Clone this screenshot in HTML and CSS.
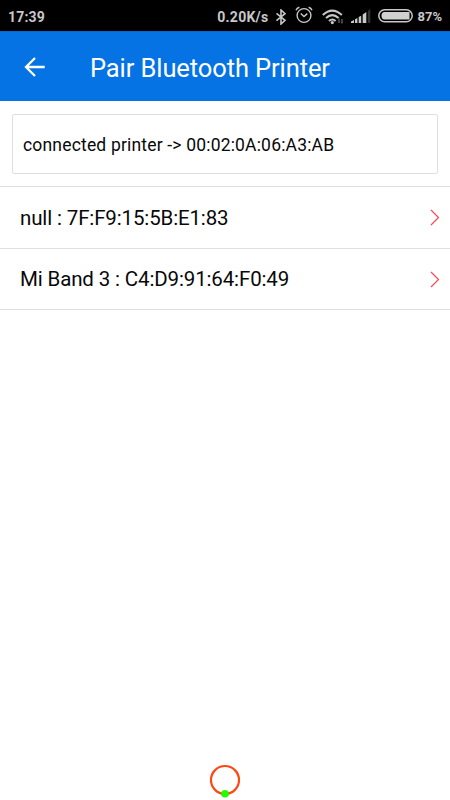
FILE: index.html
```html
<!DOCTYPE html>
<html lang="en">
<head>
    <meta charset="UTF-8">
    <meta name="viewport" content="width=device-width, initial-scale=1.0">
    <title>Pair Bluetooth Printer</title>
    <link rel="stylesheet" href="styles.css">
</head>
<body>
    <!-- Status bar -->
    <div class="status-bar">
        <span class="time">17:39</span>
        <span class="speed">0.20K/s</span>
        <svg class="bluetooth" width="12" height="16" viewBox="0 0 12 16">
            <path d="M1.5 4.3L10 11.3L6 15V1L10 4.7L1.5 11.7" fill="none" stroke="#c8c8c8" stroke-width="1.6"/>
        </svg>
        <svg class="alarm" width="18" height="18" viewBox="0 0 18 18">
            <g fill="none" stroke="#c8c8c8" stroke-width="1.4">
                <circle cx="9" cy="9.5" r="6.9"/>
                <path d="M1 4.2Q1.8 1.8 4.4 1.2M17 4.2Q16.2 1.8 13.6 1.2M5.8 7.5L9 10.5L12.3 7.6"/>
            </g>
        </svg>
        <svg class="wifi" width="22" height="16" viewBox="0 0 22 16">
            <g fill="none" stroke="#c8c8c8" stroke-width="2">
                <path d="M.8 6Q10.3 -2.8 19.8 6"/>
                <path d="M4 9.1Q10.3 3.2 16.6 9.1"/>
                <path d="M7 12Q10.3 9 13.6 12"/>
            </g>
            <circle cx="10.3" cy="13.6" r="1.6" fill="#c8c8c8"/>
            <path d="M17 9.5V14M20 10V14.5" stroke="#666" stroke-width="1.3"/>
        </svg>
        <svg class="signal" width="20" height="15" viewBox="0 0 20 15">
            <g fill="#c8c8c8">
                <path d="M0 14V12.4L3 11V14Z"/>
                <path d="M4 14V10.2L6.4 9V14Z"/>
                <path d="M7.7 14V8L10.2 6.7V14Z"/>
                <path d="M11.7 14V5.5L15.3 3V14Z"/>
            </g>
            <path d="M16.8 14V2L19.3 0V14Z" fill="#333"/>
        </svg>
        <svg class="battery" width="36" height="14" viewBox="0 0 36 14">
            <rect x=".8" y=".8" width="33.4" height="11.9" rx="5.9" fill="none" stroke="#c8c8c8" stroke-width="1.5"/>
            <path d="M6 3H31.5V10.5H6Q3.5 10 3.5 6.8Q3.5 3.5 6 3Z" fill="#d0d0d0"/>
        </svg>
        <span class="percent">87%</span>
    </div>

    <!-- Header -->
    <header>
        <svg width="22" height="22" viewBox="0 0 22 22">
            <path d="M20.7 11H2.5M11 2L2 11L11 20" fill="none" stroke="#fff" stroke-width="2.3"/>
        </svg>
        <h1><span>Pair Bluetooth Printer</span></h1>
    </header>

    <main>
        <div class="connected"><span>connected printer -&gt; 00:02:0A:06:A3:AB</span></div>

        <ul class="devices">
            <li>
                <span>null : 7F:F9:15:5B:E1:83</span>
                <svg width="10" height="17" viewBox="0 0 10 17">
                    <path d="M1 1L8.5 8.5L1 16" fill="none" stroke="#ff4650" stroke-width="1.2"/>
                </svg>
            </li>
            <li>
                <span>Mi Band 3 : C4:D9:91:64:F0:49</span>
                <svg width="10" height="17" viewBox="0 0 10 17">
                    <path d="M1 1L8.5 8.5L1 16" fill="none" stroke="#ff4650" stroke-width="1.2"/>
                </svg>
            </li>
        </ul>
    </main>

    <!-- Scan button -->
    <footer>
        <svg width="32" height="36" viewBox="0 0 32 36">
            <circle cx="16" cy="16" r="14" fill="none" stroke="#ff4713" stroke-width="2.2"/>
            <circle cx="16" cy="29.7" r="3.8" fill="#20ff00"/>
        </svg>
    </footer>
</body>
</html>
```

FILE: styles.css
```css
* {
    box-sizing: border-box;
}

body {
    font-family: Roboto, sans-serif;
    margin: 0;
    height: 800px;
    display: flex;
    flex-direction: column;
    background-color: #fff;
    color: #080808;
    overflow: hidden;
}

svg {
    display: block;
    flex-shrink: 0;
}

span {
    white-space: nowrap;
}

/* Status bar */
.status-bar {
    height: 31px;
    padding: 2px 8px 0;
    display: flex;
    align-items: center;
    background-color: #000;
    color: #c8c8c8;
    font-size: 14px;
    font-weight: bold;
}

.time {
    flex: 1;
    letter-spacing: 0.2px;
}

.speed {
    letter-spacing: 0.25px;
}

.bluetooth {
    margin-left: 7px;
}

.alarm {
    margin-left: 8px;
    margin-top: -3px;
}

.wifi {
    margin-left: 9px;
}

.signal {
    margin-left: 7px;
}

.battery {
    margin-left: 7px;
    margin-top: -2px;
}

.percent {
    margin-left: 3px;
    font-size: 13px;
}

/* Header */
header {
    height: 70px;
    padding-left: 24px;
    display: flex;
    align-items: center;
    background-color: #0573e4;
    color: #fff;
    border-top: 1px solid #0868cc;
}

h1 {
    margin: 3px 0 0 44px;
    font-size: 25.5px;
    font-weight: normal;
    line-height: 32px;
    letter-spacing: -0.1px;
}

/* Device list */
main {
    flex: 1;
}

.connected {
    height: 60px;
    margin: 13px 12px 12px;
    padding: 1px 9px 0 10px;
    display: flex;
    align-items: center;
    border: 1px solid #dfdfdf;
    border-radius: 2px;
    font-size: 17.5px;
    letter-spacing: 0.18px;
}

.devices {
    margin: 0;
    padding: 0;
    list-style: none;
    border-top: 1px solid #e0e0e0;
}

.devices li {
    height: 61.5px;
    padding: 1px 10px 0 20px;
    display: flex;
    align-items: center;
    justify-content: space-between;
    border-bottom: 1px solid #e0e0e0;
    font-size: 20.5px;
    letter-spacing: -0.14px;
}

footer {
    display: flex;
    justify-content: center;
}
```
